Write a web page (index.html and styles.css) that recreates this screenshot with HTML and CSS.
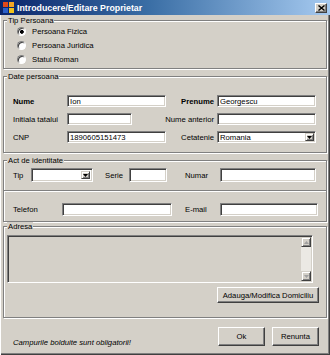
FILE: index.html
```html
<!DOCTYPE html>
<html>
<head>
<meta charset="utf-8">
<title>Introducere/Editare Proprietar</title>
<link rel="stylesheet" href="styles.css">
</head>
<body>
<div class="window">
  <div class="titlebar">
    <svg class="app-icon" width="11" height="11" viewBox="0 0 11 11">
      <rect x="0" y="0" width="5" height="5" fill="#e2491b"/>
      <rect x="6" y="0" width="5" height="5" fill="#f4a623"/>
      <rect x="0" y="6" width="5" height="5" fill="#2c5fc8"/>
      <rect x="6" y="6" width="5" height="5" fill="#f1c21c"/>
    </svg>
    <span class="title">Introducere/Editare Proprietar</span>
    <span class="close-btn"><svg width="7" height="6" viewBox="0 0 7 6"><path d="M0.5 0.5L6.5 5.5M6.5 0.5L0.5 5.5" stroke="#000" stroke-width="1.4"/></svg></span>
  </div>
  <div class="body">
    <div class="group">
      <div class="legend">Tip Persoana</div>
      <div class="radios">
        <div class="radio"><span class="radio-dot checked"></span>Persoana Fizica</div>
        <div class="radio"><span class="radio-dot"></span>Persoana Juridica</div>
        <div class="radio"><span class="radio-dot"></span>Statul Roman</div>
      </div>
    </div>

    <div class="group group-gap">
      <div class="legend">Date persoana</div>
      <div class="grid">
        <span class="lbl lbl-b">Nume</span>
        <input class="tb w99" type="text" value="Ion">
        <span class="lbl lbl-r lbl-b">Prenume</span>
        <input class="tb w99" type="text" value="Georgescu">

        <span class="lbl">Initiala tatalui</span>
        <input class="tb w65" type="text" value="">
        <span class="lbl lbl-r">Nume anterior</span>
        <input class="tb w99" type="text" value="">

        <span class="lbl">CNP</span>
        <input class="tb w99" type="text" value="1890605151473">
        <span class="lbl lbl-r">Cetatenie</span>
        <div class="combo combo-sm w99"><span class="combo-text">Romania</span><span class="combo-btn"><svg width="5" height="3" viewBox="0 0 5 3"><path d="M0 0H5L2.5 3Z" fill="#000"/></svg></span></div>
      </div>
    </div>

    <div class="group group-gap">
      <div class="legend">Act de identitate</div>
      <div class="row act-row1">
        <span class="lbl l-tip">Tip</span>
        <div class="combo combo-tip"><span class="combo-text"></span><span class="combo-btn"><svg width="5" height="3" viewBox="0 0 5 3"><path d="M0 0H5L2.5 3Z" fill="#000"/></svg></span></div>
        <span class="lbl l-serie">Serie</span>
        <input class="tb tb-serie" type="text" value="">
        <span class="lbl l-numar">Numar</span>
        <input class="tb tb-numar" type="text" value="">
      </div>
      <div class="sep"></div>
      <div class="row act-row2">
        <span class="lbl l-tel">Telefon</span>
        <input class="tb tb-tel" type="text" value="">
        <span class="lbl l-mail">E-mail</span>
        <input class="tb tb-mail" type="text" value="">
      </div>
    </div>

    <div class="group group-addr">
      <div class="legend">Adresa</div>
      <div class="textarea">
        <div class="ta-content"></div>
        <div class="scrollbar">
          <span class="sb-btn"><svg width="5" height="3" viewBox="0 0 5 3"><path d="M0 3H5L2.5 0Z" fill="#a0a0a0"/></svg></span>
          <span class="sb-track"></span>
          <span class="sb-btn"><svg width="5" height="3" viewBox="0 0 5 3"><path d="M0 0H5L2.5 3Z" fill="#a0a0a0"/></svg></span>
        </div>
      </div>
      <div class="addr-actions">
        <button class="btn btn-addr" type="button">Adauga/Modifica Domiciliu</button>
      </div>
    </div>

    <div class="footer">
      <span class="note">Campurile bolduite sunt obligatorii!</span>
      <button class="btn btn-ok" type="button">Ok</button>
      <button class="btn btn-cancel" type="button">Renunta</button>
    </div>
  </div>
</div>
</body>
</html>
```

FILE: styles.css
```css
* { box-sizing: border-box; }

html, body {
  margin: 0;
  padding: 0;
}

body {
  background: #d4d0c8;
  font-family: "Liberation Sans", Arial, sans-serif;
  font-size: 7.7px;
  color: #000;
}

.window {
  width: 330px;
  height: 355px;
  background: #d4d0c8;
  display: flex;
  flex-direction: column;
  overflow: hidden;
  box-shadow: inset 1px 0 #ffffff, inset -1px -1px #404040, inset -2px -2px #808080;
}

/* Title bar */
.titlebar {
  flex: none;
  height: 15px;
  display: flex;
  align-items: center;
  padding: 0 3px;
  background: linear-gradient(to right, #0a246a 0%, #3a6ea5 45%, #a6caf0 100%);
  color: #fff;
  font-weight: bold;
  font-size: 8.8px;
}

.app-icon {
  flex: none;
  margin-right: 3px;
}

.title {
  flex: 1;
  white-space: nowrap;
}

.close-btn {
  flex: none;
  width: 12px;
  height: 10px;
  display: flex;
  align-items: center;
  justify-content: center;
  background: #d4d0c8;
  border: 1px solid;
  border-color: #ffffff #404040 #404040 #ffffff;
  box-shadow: inset -1px -1px #808080;
}

/* Body */
.body {
  flex: 1;
  display: flex;
  flex-direction: column;
  padding: 5px 3px 0 3px;
}

.group {
  border: 1px solid #808080;
  box-shadow: inset 1px 1px #ffffff, 1px 1px #ffffff;
}

.group-gap { margin-top: 7px; }
.group-addr { margin-top: 4px; }

.legend {
  display: table;
  margin: -5px 0 0 3px;
  padding: 0 1px;
  height: 9px;
  line-height: 9px;
  background: #d4d0c8;
  white-space: nowrap;
}

/* Radios */
.radios {
  margin-top: -1px;
  padding-bottom: 2px;
}

.radio {
  height: 14px;
  display: flex;
  align-items: center;
  padding-left: 13px;
}

.radio-dot {
  flex: none;
  width: 9px;
  height: 9px;
  margin-right: 6px;
  border-radius: 50%;
  background: #fff;
  border: 1px solid;
  border-color: #808080 #ffffff #ffffff #808080;
  box-shadow: inset 1px 1px #404040;
}

.radio-dot.checked {
  background: radial-gradient(circle at 55% 55%, #000 0 1.6px, #fff 2.2px);
}

/* Date persoana grid */
.grid {
  margin-top: 14px;
  padding: 0 0 9px 9px;
  display: grid;
  grid-template-columns: 54px 99px 51px 99px;
  grid-auto-rows: 12px;
  row-gap: 6px;
  align-items: center;
}

.lbl {
  white-space: nowrap;
  line-height: 9px;
}

.lbl-b { font-weight: bold; }

.lbl-r {
  display: flex;
  justify-content: flex-end;
  padding-right: 3px;
}

.tb {
  display: block;
  height: 12px;
  margin: 0;
  padding: 0 2px;
  font: inherit;
  color: #000;
  background: #fff;
  border: 1px solid;
  border-color: #808080 #ffffff #ffffff #808080;
  box-shadow: inset 1px 1px #404040, inset -1px -1px #d4d0c8;
  outline: none;
}

.w99 { width: 99px; }
.w65 { width: 65px; }

/* Combo box */
.combo {
  display: flex;
  height: 14px;
  padding: 2px;
  background: #fff;
  border: 1px solid;
  border-color: #808080 #ffffff #ffffff #808080;
  box-shadow: inset 1px 1px #404040, inset -1px -1px #d4d0c8;
}

.combo-sm { height: 12px; padding: 1px 1px 1px 2px; }

.combo-text {
  flex: 1;
  display: flex;
  align-items: center;
  white-space: nowrap;
}

.combo-btn {
  flex: none;
  width: 9px;
  display: flex;
  align-items: center;
  justify-content: center;
  background: #d4d0c8;
  border: 1px solid;
  border-color: #d4d0c8 #404040 #404040 #d4d0c8;
  box-shadow: inset 1px 1px #ffffff, inset -1px -1px #808080;
}

/* Act de identitate rows */
.row {
  display: flex;
  align-items: center;
  padding-left: 9px;
}

.act-row1 {
  height: 14px;
  margin-top: 3px;
}

.act-row1 .tb { height: 14px; }

.l-tip { width: 18px; flex: none; }
.combo-tip { width: 62px; flex: none; }
.l-serie { width: 24px; margin-left: 12px; flex: none; }
.tb-serie { width: 38px; flex: none; }
.l-numar { width: 35px; margin-left: 18px; flex: none; }
.tb-numar { width: 96px; flex: none; }

.sep {
  margin-top: 8px;
  height: 2px;
  border-top: 1px solid #808080;
  border-bottom: 1px solid #ffffff;
}

.act-row2 {
  height: 13px;
  margin-top: 11px;
  margin-bottom: 5px;
}

.act-row2 .tb { height: 13px; }

.l-tel { width: 49px; flex: none; }
.tb-tel { width: 110px; flex: none; }
.l-mail { width: 35px; margin-left: 13px; flex: none; }
.tb-mail { width: 98px; flex: none; }

/* Adresa */
.textarea {
  display: flex;
  width: 306px;
  height: 48px;
  margin: 4px 0 0 3px;
  background: #d4d0c8;
  border: 1px solid;
  border-color: #808080 #ffffff #ffffff #808080;
  box-shadow: inset 1px 1px #404040, inset -1px -1px #d4d0c8;
  padding: 1px;
}

.ta-content { flex: 1; }

.scrollbar {
  flex: none;
  width: 10px;
  display: flex;
  flex-direction: column;
}

.sb-btn {
  flex: none;
  height: 10px;
  display: flex;
  align-items: center;
  justify-content: center;
  background: #d4d0c8;
  border: 1px solid;
  border-color: #d4d0c8 #404040 #404040 #d4d0c8;
  box-shadow: inset 1px 1px #ffffff, inset -1px -1px #808080;
}

.sb-track {
  flex: 1;
  background: #ebe9e4;
}

.addr-actions {
  display: flex;
  justify-content: flex-end;
  margin: 4px 7px 0 0;
  padding-bottom: 14px;
}

/* Buttons */
.btn {
  margin: 0;
  padding: 0;
  font: inherit;
  color: #000;
  background: #d4d0c8;
  border: 1px solid;
  border-color: #ffffff #404040 #404040 #ffffff;
  box-shadow: inset -1px -1px #808080;
  white-space: nowrap;
}

.btn-addr {
  width: 102px;
  height: 16px;
}

/* Footer */
.footer {
  flex: 1;
  display: flex;
  align-items: flex-start;
  padding: 9px 8px 0 10px;
}

.note {
  flex: 1;
  margin-top: 11px;
  font-style: italic;
  line-height: 9px;
  white-space: nowrap;
}

.btn-ok,
.btn-cancel {
  flex: none;
  width: 47px;
  height: 19px;
}

.btn-cancel { margin-left: 7px; }
```
